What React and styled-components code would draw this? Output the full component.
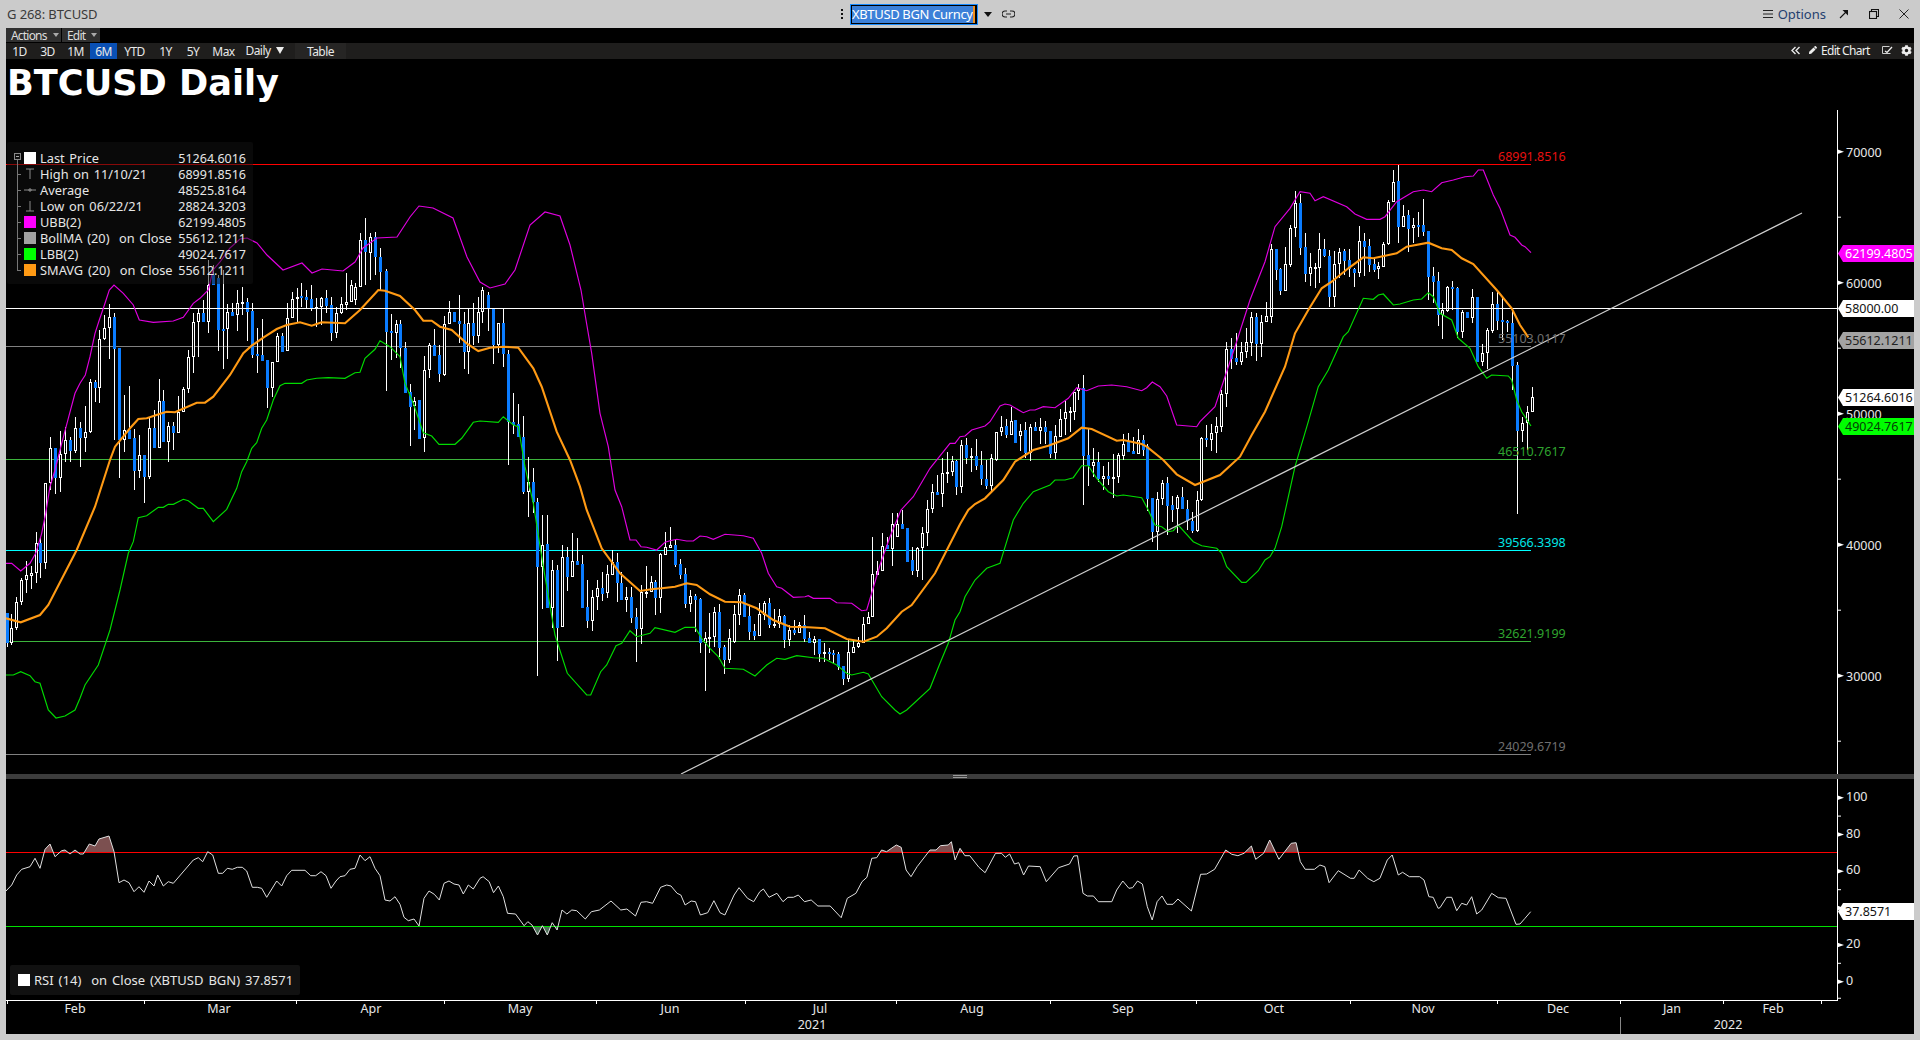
import React from "react";
import styled, { createGlobalStyle } from "styled-components";
import { FaCog, FaPen } from "react-icons/fa";

const UI_FONT = `"Noto Sans", "Open Sans", "Liberation Sans", sans-serif`;

const GlobalStyle = createGlobalStyle`
  html, body { margin: 0; padding: 0; background: #cbcbcb; }
  * { box-sizing: border-box; }
`;

/* ---------- chart data (page coordinates through per-crop transforms) ---------- */
const parseCandles = (src, tx, ty) =>
  src.trim().split(/\s*;\s*/).filter(Boolean).map((row) => {
    const [x, hi, top, bot, lo, c] = row.split(/\s+/);
    return { x: tx(+x), hi: ty(+hi), top: ty(+top), bot: ty(+bot), lo: ty(+lo), blue: c === "b" };
  });

const C7 = `20 970 970 1058 1070 b;34 972 1015 1058 1064 w;49 920 935 1015 1020 w;64 865 870 935 945 w;79 812 855 870 910 w;93 828 850 857 897 w;107 727 760 850 880 w;121 745 760 820 865 b;136 578 580 820 838 w;151 440 475 580 600 w;166 475 475 565 613 b;181 423 492 565 605 w;196 410 450 493 515 w;211 440 450 482 515 b;226 382 415 482 490 w;241 396 415 443 530 b;256 348 427 443 485 w;271 268 277 427 428 w;286 270 277 293 335 b;298 120 148 293 338 w;313 75 115 148 150 w;328 42 82 115 208 w;343 70 82 177 450 b;358 173 173 450 565 b;373 315 420 450 485 w;388 288 420 447 447 b;403 418 445 543 600 b;418 435 495 543 565 w;433 495 495 560 640 b;448 385 415 560 568 w;463 360 415 473 473 b;476 267 333 473 475 w;490 300 333 455 455 b;505 395 408 455 515 w;520 395 408 428 480 b;535 318 367 428 428 w;550 290 298 367 367 w;565 180 202 298 310 w;580 68 97 202 248 w;595 55 70 97 200 w;610 30 70 97 97 b;625 -90 -15 97 128 w;640 -75 -45 -15 -15 b;655 -45 -36 120 182 b;668 -60 116 120 238 b;682 42 67 118 207 w;697 40 67 77 77 b;712 0 40 75 122 w;727 -10 35 40 75 w;742 25 35 65 153 b;757 40 63 195 203 b;772 115 192 197 250 b;787 88 195 213 213 b;802 210 210 293 353 b;817 215 215 293 320 w;832 130 138 215 215 w;845 130 138 185 185 b;860 40 85 182 182 w;875 5 28 85 85 w;890 -5 20 28 100 w;904 -20 18 22 50 b;918 0 22 30 55 b;934 -15 27 53 63 b;949 25 50 52 112 w;964 20 25 52 105 w;979 0 25 47 70 b;994 20 45 128 152 b;1009 50 70 128 143 w;1023 22 42 70 72 w;1037 -51 35 45 60 w;1052 -30 -15 35 35 w;1065 -21 -9 30 45 w;1080 -171 -150 -9 -9 w;1095 -216 -150 -114 -15 b;1110 -171 -159 -111 -30 w;1126 -174 -159 -99 -45 b;1141 -126 -99 -54 0 b;1157 -63 -57 125 302 b;1172 72 122 128 210 b;1187 90 102 128 205 w;1201 90 102 175 235 b;1214 155 175 310 310 b;1229 282 307 350 467 b;1243 322 332 348 420 w;1258 330 330 447 447 b;1273 198 240 445 485 w;1288 160 165 240 263 w;1303 118 165 197 197 b;1318 165 195 253 275 b;1333 78 103 255 258 w;1348 33 67 103 103 w;1363 65 67 95 95 b;1378 15 93 103 160 b;1391 65 102 185 238 b;1405 55 100 185 253 w;1420 40 100 137 165 b;1435 22 67 137 160 w`;

const C8 = `7 -10 0 67 100 w;25 5 15 55 122 b;40 55 55 165 222 b;55 100 100 165 190 w;70 55 100 193 230 b;85 180 192 397 525 b;100 310 397 405 432 b;115 343 403 440 440 b;130 378 440 605 612 b;143 500 575 605 680 w;158 535 575 635 670 b;172 625 635 830 1157 b;187 675 765 830 958 w;202 675 763 953 953 b;217 810 840 953 1015 w;232 825 840 1013 1112 b;247 765 800 1012 1012 w;262 770 800 860 902 b;277 730 813 860 860 w;292 745 813 825 825 b;307 795 822 953 953 b;320 870 950 992 1015 b;335 900 920 992 1022 w;350 870 895 920 960 w;365 845 893 912 932 b;380 825 852 910 925 w;395 780 815 855 855 w;410 790 815 880 935 b;424 845 880 930 930 b;439 890 922 930 965 w;454 890 920 983 1000 b;469 955 980 1017 1115 b;484 885 905 1017 1062 w;499 828 905 908 925 w;512 857 877 905 905 w;526 870 877 923 975 b;541 790 793 923 968 w;556 725 772 795 795 w;571 712 765 775 775 w;586 750 765 825 830 b;601 808 822 855 867 b;616 833 852 942 955 b;631 900 918 942 965 w;646 912 917 930 1025 b;661 925 927 1058 1088 b;676 1025 1045 1058 1202 w;688 968 1040 1047 1090 w;703 950 967 1042 1070 w;718 942 967 1073 1100 b;733 1065 1070 1110 1152 b;748 1018 1045 1110 1120 w;763 945 972 1055 1060 w;778 897 915 975 1005 w;793 908 915 980 980 b;808 948 978 1025 1050 b;823 1003 1023 1037 1050 b;838 940 973 1037 1037 w;853 932 940 975 990 w;866 925 940 1005 1015 b;881 958 1003 1007 1015 w;896 958 978 1003 1015 w;911 975 978 1050 1073 b;926 1005 1020 1050 1068 w;941 990 1020 1028 1035 b;956 995 1005 1028 1028 w;971 975 1005 1047 1055 b;986 1025 1045 1060 1060 b;1001 1038 1048 1060 1095 w;1016 1048 1048 1093 1115 b;1031 1060 1087 1092 1115 w;1046 1075 1086 1092 1110 b;1058 1080 1090 1095 1120 b;1073 1085 1092 1130 1140 b;1088 1128 1128 1167 1185 b;1103 1050 1087 1167 1175 w;1118 1050 1070 1090 1090 w;1133 1040 1060 1070 1075 w;1148 980 1003 1060 1060 w;1163 965 982 1003 1003 w;1177 740 852 982 982 w;1192 812 842 855 855 w;1207 730 767 842 842 w;1222 740 765 778 778 b;1235 670 703 778 828 w;1250 670 703 740 740 w;1265 660 703 717 717 b;1280 713 713 815 815 b;1295 770 810 843 855 b;1310 770 775 843 860 w;1325 710 730 775 870 w;1340 630 658 730 767 w;1355 583 607 658 668 w;1370 555 605 615 615 b;1385 505 550 613 652 w;1400 487 545 550 578 w;1415 498 513 545 558 w;1427 510 513 590 615 b`;

const C9 = `2 450 465 590 608 w;17 445 465 505 522 b;32 473 498 503 545 w;47 448 498 527 540 b;62 483 525 568 585 b;77 510 568 587 598 b;92 492 505 587 605 w;107 425 425 510 512 w;122 378 410 425 438 w;137 388 408 435 443 b;152 350 392 435 435 w;164 390 390 458 458 b;179 403 422 437 483 w;194 397 420 488 503 b;209 403 412 488 513 w;224 395 412 422 422 b;239 385 412 422 463 w;254 393 412 425 463 b;269 423 423 492 505 b;284 405 438 490 508 w;299 358 388 440 440 w;314 333 365 388 435 w;329 350 363 365 425 w;341 305 305 365 390 w;355 283 295 303 330 w;370 255 295 497 645 b;385 415 495 527 587 b;400 475 517 527 560 w;415 487 517 567 575 b;430 527 557 567 600 w;445 517 557 567 585 b;460 492 562 565 625 w;475 490 495 562 578 w;490 432 462 497 510 w;505 430 455 485 485 b;520 442 483 492 492 b;533 418 450 492 492 w;548 435 450 480 497 b;562 462 467 627 662 b;577 625 625 727 755 b;592 605 628 727 780 w;607 570 580 628 645 w;622 562 580 647 735 b;637 618 645 660 695 b;652 615 622 658 730 w;667 590 622 658 658 b;682 630 657 692 720 b;697 665 692 722 730 b;710 603 630 722 725 w;724 440 445 630 632 w;739 405 445 450 470 b;754 402 430 450 483 w;769 380 408 430 490 w;784 300 313 410 425 w;799 155 178 313 352 w;814 145 178 207 237 b;829 130 205 215 225 b;844 155 187 215 225 w;859 115 157 187 205 w;874 65 82 158 197 w;889 70 82 162 212 b;902 75 97 162 200 w;917 37 78 97 97 w`;

const C10 = `212 283 297 500 518 w;227 297 297 360 390 b;241 355 358 422 435 b;256 292 343 422 422 w;271 225 235 345 350 w;286 122 160 235 260 w;301 133 160 293 315 b;316 250 292 372 395 b;331 310 352 372 408 w;346 340 350 353 415 w;358 250 297 353 400 w;373 268 297 318 320 b;388 300 317 440 472 b;403 302 343 440 472 w;418 295 305 343 385 w;433 297 303 333 375 b;448 297 330 358 380 b;463 355 358 368 412 b;478 228 273 368 380 w;493 250 273 290 378 b;508 268 288 345 365 b;523 325 343 360 365 b;535 335 348 358 388 w;550 275 283 350 350 w;565 150 155 283 285 w;580 60 95 155 155 w;595 45 93 230 278 b;610 165 197 230 230 w;625 180 195 237 305 b;640 205 225 235 280 w;655 185 225 228 260 b;670 148 225 245 258 b;685 243 243 380 450 b;700 352 378 395 458 b;715 365 393 495 527 b;727 460 480 495 567 w;742 408 412 482 485 w;757 393 412 417 480 b;772 412 413 545 565 b;787 480 487 545 565 w;802 485 487 503 503 b;817 418 440 503 518 w;832 440 440 637 637 b;847 583 610 637 648 w;862 535 540 610 658 w;877 425 462 543 548 w;892 425 462 513 540 b;905 437 510 515 570 b;920 510 513 520 545 b;935 475 520 648 720 b;950 635 645 843 1092 b;965 800 820 843 875 w;980 768 787 820 900 w;995 712 742 787 787 w`;

const third = (z) => z / 3;
const CANDLES = [
  ...parseCandles(C7, third, (z) => 290 + z / 3),
  ...parseCandles(C8, (z) => 480 + z / 3, (z) => 290 + z / 3),
  ...parseCandles(C9, (z) => 960 + z / 3, (z) => 290 + z / 3),
  ...parseCandles(C10, (z) => 1200 + z / 3, (z) => 150 + z / 3),
];

const seg = (src, ox, oy, sx = 1 / 3) =>
  src.trim().split(/\s+/).map((p) => {
    const [x, y] = p.split(",").map(Number);
    return [(ox + x * sx).toFixed(1), (oy + y / 3).toFixed(1)].join(",");
  });
const raw = (src) => src.trim().split(/\s+/);

const UPPER_BAND = [
  ...seg("18,820 35,820 62,843 90,820 107,790 125,730 137,670 150,590 165,540 185,460 205,385 225,310 240,280 256,255 270,200 285,130 298,90 315,40 328,0", 0, 290),
  ...raw("114,285"),
  ...seg("370,10 400,45 418,90 460,97 520,93 550,82 580,40 600,25 625,0", 0, 290),
  ...raw("213,270 220,262 230,248 240,239 247,238 257,243 267,255 283,270 302,263 312,273 322,269 343,271 355,262 363,248 377,238 397,237 410,217 419,206 433,208 453,218 467,257 480,282 490,288 505,284 515,270 530,225 545,212 560,216 570,245"),
  ...seg("303,0 318,90 335,190 360,370 385,470 405,600 425,650 450,750 468,750 483,770 500,772 530,780 555,757 570,752 590,748 620,753 640,753 660,738 680,740 700,748 735,733 790,737 820,745 845,790 865,850 890,890 905,895 940,922 975,920 985,917 1000,925 1050,925 1070,938 1115,940 1145,962 1160,960 1200,825 1230,740 1263,660 1300,620 1350,535 1410,460 1425,460", 480, 290),
  ...seg("0,440 15,438 35,420 75,408 90,395 120,348 135,342 150,345 190,368 210,360 225,360 250,350 285,353 325,325 350,293 380,302 415,288 455,285 500,290 545,302 560,293 577,276 600,290 620,318 650,405 710,410", 960, 290),
  ...seg("0,815 45,770 75,680 105,590 150,450 195,335 225,230 270,175 300,125 330,130 345,152 370,140 440,170 465,192 500,208 540,208 555,200 590,155 640,125 670,120 695,125 725,98 760,90 795,80 820,78 835,60 850,60 880,135 900,175 930,255 945,262 965,285 975,290 993,308", 1200, 150),
];

const LOWER_BAND = [
  ...seg("18,1155 40,1155 62,1145 90,1157 105,1175 120,1180 145,1260", 0, 290),
  ...raw("56,718 65,716"),
  ...seg("225,1260 240,1225 255,1185 295,1125 330,1020 360,900 385,790 400,755 415,683 440,677 475,652 490,652 505,643 520,643 550,628 565,632 595,655 610,655 640,695 680,658 710,595 725,545 740,515 755,475 770,458 785,415 800,390 820,330 840,287 855,280 905,280 920,270 950,265 985,263 1035,265 1065,248 1080,247 1095,205 1125,178 1140,152 1170,170 1200,200 1215,280 1240,340 1270,428 1295,438 1317,463 1365,463 1385,445 1420,397", 0, 290),
  ...seg("0,393 55,397 70,380 100,405 115,410 135,530 160,640 190,830 225,1035 262,1150 320,1215 332,1215 362,1145 380,1125 408,1067 425,1060 450,1022 470,1040 510,1030 525,1013 585,1027 615,1012 645,1012 665,1045 690,1075 715,1100 735,1135 790,1138 825,1158 860,1125 890,1105 915,1108 950,1097 1000,1103 1030,1105 1070,1125 1100,1150 1115,1155 1150,1147 1165,1152 1205,1220 1245,1260", 480, 290),
  ...raw("900,714"),
  ...seg("1280,1260 1350,1195 1380,1120 1405,1060 1425,990", 480, 290),
  ...seg("0,965 15,920 45,870 80,835 120,820 160,690 190,640 220,605 270,585 285,570 315,570 340,563 365,527 385,527 410,565 445,605 470,618 490,615 545,623 565,660 585,705 605,710 625,725 640,722 655,705 700,755 725,767 770,775 785,790 800,830 845,877 858,877 895,842 915,810 930,800 945,775 965,710 1005,530 1045,395 1075,290 1105,240 1150,140 1165,125", 960, 290),
  ...seg("490,445 520,448 535,435 550,432 580,465 600,462 640,450 665,447 685,428 700,440 720,490 755,510 775,565 810,595 835,650 860,685 875,675 925,678 935,690 950,750 965,785 993,828", 1200, 150),
];

const SMA = [
  ...seg("18,985 62,997 120,975 145,945 230,780 285,650 330,510 345,470 390,415 415,387 440,385 485,370 500,365 525,367 590,338 615,338 640,320 690,255 730,190 755,167 790,143 830,117 860,105 900,97 935,107 965,97 1035,100 1080,60 1135,0 1155,2 1200,18 1245,60 1270,92 1295,92 1320,110 1355,120 1400,160 1435,183", 0, 290),
  ...seg("30,173 70,170 115,173 160,235 185,290 230,425 270,510 300,590 320,660 365,775 420,850 480,903 520,897 545,895 585,890 620,880 650,885 690,913 735,935 785,937 830,955 880,990 930,1010 985,1012 1035,1015 1100,1047 1150,1055 1190,1040 1220,1015 1265,965 1295,945 1365,850", 480, 290),
  ...seg("0,703 25,660 45,642 75,625 130,570 165,515 220,480 265,467 325,445 365,413 395,417 470,452 490,450 545,462 560,470 610,510 650,553 705,585 780,555 840,500 875,435 915,365 975,230 1005,130 1045,60", 960, 290),
  ...seg("365,415 395,395 445,355 490,322 520,325 590,310 620,290 685,278 725,295 755,300 785,325 820,342 890,420 935,475 960,525 985,562", 1200, 150),
];

const RSI = [
  ...seg("18,393 35,375 50,345 65,328 90,320 105,295 120,325 135,268 150,252 165,290 185,272 195,270 210,282 225,270 240,282 250,282 268,252 285,258 297,237 327,228 342,275 357,368 372,360 387,368 402,395 417,380 432,397 447,363 462,378 473,345 490,378 505,365 520,370 580,300 595,293 608,305 623,275 638,285 655,340 668,340 682,325 697,328 712,322 727,322 740,333 757,382 772,382 785,385 800,412 830,363 845,378 860,347 875,331 915,331 932,347 947,347 963,335 978,347 993,385 1008,363 1020,350 1035,347 1050,328 1065,325 1080,285 1095,302 1110,290 1125,325 1140,347 1155,420 1170,423 1185,410 1200,433 1212,472 1225,482 1242,477 1257,498 1272,415 1287,393 1303,403 1318,420 1332,370 1347,363 1362,372 1377,375 1390,402 1405,375 1420,387", 0, 760),
  ...seg("0,355 5,350 15,365 22,398 30,378 38,410 45,460 58,462 72,497 78,485 85,495 94,525 102,497 110,525 118,488 126,510 134,450 142,462 150,450 158,452 172,477 182,455 195,450 214,423 230,450 240,447 254,468 263,427 272,425 282,430 295,382 305,375 312,378 322,400 328,405 335,435 345,423 352,425 360,465 372,458 382,422 392,458 400,465 415,405 423,383 437,415 447,425 457,395 463,387 472,412 485,400 495,425 503,412 512,412 520,405 530,425 541,420 552,438 572,438 590,473 600,415 614,400 624,365 632,352 640,295 648,293 656,270 664,275 680,255 688,262 696,330 704,350 714,320 735,270 745,270 752,257 765,255 770,245 776,300 784,265 792,287 800,287 815,322 825,338 842,280 852,280 858,292 865,282 873,312 880,308 888,345 896,318 915,320 925,365 945,323 963,312 970,288 976,287 985,400 992,408 1002,408 1010,425 1032,425 1040,390 1050,363 1060,385 1066,383 1074,363 1082,372 1090,440 1098,480 1106,425 1114,408 1122,433 1132,433 1140,417 1162,453 1177,343 1187,342 1200,328 1218,270 1228,283 1238,287 1248,280 1260,258 1267,298 1280,280 1290,240 1305,298 1325,250 1333,248 1340,305 1348,328 1363,328 1372,315 1380,320 1387,368 1402,332 1422,355 1428,355 1436,330 1450,355 1460,365 1470,355 1482,300 1490,285 1500,345 1507,337 1518,350 1535,350 1542,360 1550,410 1557,412 1565,445", 480, 760, 0.6122),
  ...seg("0,503 20,472 35,472 50,512 65,490 80,495 95,470 110,522 125,510 155,460 175,473 198,475 228,553 240,552 255,535 272,515", 1440, 740),
];

const priceY = (p) => 151.7 + (70000 - p) * 0.0131;
const rsiY = (v) => 981.7 - v * 1.84;

const LEVELS = [
  { value: "68991.8516", y: 164.5, color: "#ff0000", text: "#e81010" },
  { value: "55103.0117", y: 346.5, color: "#808080", text: "#6f6f6f" },
  { value: "46510.7617", y: 459.5, color: "#3cb43c", text: "#2fa42f" },
  { value: "39566.3398", y: 550.5, color: "#00ffff", text: "#00e6e6" },
  { value: "32621.9199", y: 641.5, color: "#3cb43c", text: "#2fa42f" },
  { value: "24029.6719", y: 754.5, color: "#808080", text: "#6f6f6f" },
];

const PRICE_TICKS = [70000, 60000, 50000, 40000, 30000];
const PRICE_MINOR = [65000, 55000, 45000, 35000, 25000];
const RSI_TICKS = [100, 80, 60, 20, 0];
const RSI_MINOR = [90, 50, 10, -9];

const TAGS = [
  { label: "62199.4805", y: 253.5, bg: "#ff00ff", fg: "#ffffff" },
  { label: "58000.00", y: 308.5, bg: "#ffffff", fg: "#111111" },
  { label: "55612.1211", y: 340.5, bg: "#a3a3a3", fg: "#222222" },
  { label: "51264.6016", y: 397.5, bg: "#ffffff", fg: "#111111" },
  { label: "49024.7617", y: 426.5, bg: "#00ff00", fg: "#063d06" },
];

const MONTHS = [
  ["Feb", 75], ["Mar", 219], ["Apr", 371], ["May", 520], ["Jun", 670], ["Jul", 820], ["Aug", 972],
  ["Sep", 1123], ["Oct", 1274], ["Nov", 1423], ["Dec", 1558], ["Jan", 1672], ["Feb", 1773],
];
const MONTH_TICKS = [7, 144, 296, 444, 596, 745, 896, 1050, 1196, 1350, 1497, 1620, 1723, 1821];

const LEGEND = [
  { mark: "box", swatch: "#ffffff", label: "Last Price", value: "51264.6016" },
  { mark: "high", label: "High on 11/10/21", value: "68991.8516" },
  { mark: "avg", label: "Average", value: "48525.8164" },
  { mark: "low", label: "Low on 06/22/21", value: "28824.3203" },
  { swatch: "#ff00ff", label: "UBB(2)", value: "62199.4805" },
  { swatch: "#a3a3a3", label: "BollMA (20)  on Close", value: "55612.1211" },
  { swatch: "#00ff00", label: "LBB(2)", value: "49024.7617" },
  { swatch: "#ff9a14", label: "SMAVG (20)  on Close", value: "55612.1211", last: true },
];

const PERIODS = [
  { label: "1D", w: 27 }, { label: "3D", w: 27 }, { label: "1M", w: 27 }, { label: "6M", w: 27, active: true },
  { label: "YTD", w: 33 }, { label: "1Y", w: 27 }, { label: "5Y", w: 26 }, { label: "Max", w: 33 },
];

/* ---------- styled parts ---------- */
const Page = styled.div`
  width: 1920px; height: 1040px; overflow: hidden;
  background: #cbcbcb; padding: 0 6px 6px;
  display: flex; flex-direction: column;
  font-family: ${UI_FONT}; font-size: 13px;
`;
const TitleBar = styled.header`
  height: 28px; flex: none; display: flex; align-items: center; color: #333;
`;
const WindowTitle = styled.span`
  width: 834px; flex: none; padding-left: 1px; font-size: 13px; letter-spacing: -.1px; color: #3a3a3a;
`;
const SymbolGroup = styled.div` display: flex; align-items: center; `;
const SymbolInput = styled.div`
  width: 128px; height: 21px; margin-left: 6px; border: 1px solid #1a8cff; background: #000;
  padding: 1px 4px 1px 1px; display: flex;
`;
const SymbolText = styled.span`
  flex: 1; background: #3c80d8; color: #fff; font-size: 13px; line-height: 17px; white-space: nowrap;
  letter-spacing: -.35px; border-right: 2px solid #f0901e;
`;
const WindowActions = styled.div`
  margin-left: auto; display: flex; align-items: center; padding-right: 3px;
`;
const OptionsText = styled.span` color: #24406e; font-size: 13px; margin: 0 11px 0 5px; `;
const IconButton = styled.span`
  display: inline-flex; width: ${(p) => p.$w || 14}px; height: 14px; align-items: center; justify-content: center;
  margin-right: ${(p) => p.$mr || 0}px; margin-left: ${(p) => p.$ml || 0}px;
`;
const Workspace = styled.main`
  flex: 1; min-height: 0; background: #000; display: flex; flex-direction: column; color: #eee;
`;
const ActionRow = styled.div` height: 15px; flex: none; display: flex; gap: 1px; `;
const ActionButton = styled.button`
  all: unset; box-sizing: border-box; width: ${(p) => p.$w}px; height: 14px; background: #303030; color: #ddd;
  font-size: 12px; line-height: 13px; letter-spacing: -.8px; padding-left: 5px; display: flex; align-items: center; gap: 6px;
  &::after { content: ""; border: 3px solid transparent; border-top: 4px solid #aaa; border-bottom: 0; }
`;
const PeriodBar = styled.nav`
  height: 16px; flex: none; background: #1f1e1d; display: flex; align-items: stretch;
`;
const PeriodButton = styled.button`
  all: unset; box-sizing: border-box; width: ${(p) => p.$w}px; margin-right: 1px; text-align: center;
  font-size: 12px; line-height: 13px; letter-spacing: -.55px; color: #e8e8e8;
  background: ${(p) => (p.$active ? "#0a50b4" : "#1f1e1d")};
`;
const DailySelect = styled(PeriodButton)`
  display: flex; align-items: center; justify-content: center; gap: 5px; padding-bottom: 2px;
  &::after { content: ""; border: 4px solid transparent; border-top: 7px solid #eee; border-bottom: 0; }
`;
const TableButton = styled(PeriodButton)` margin-left: 6px; background: #262524; `;
const BarRight = styled.div` margin-left: auto; display: flex; align-items: center; color: #eee; padding-bottom: 2px; `;
const EditChart = styled.span`
  display: flex; align-items: center; gap: 4px; font-size: 12px; letter-spacing: -.7px; width: 72px; margin-right: 3px; padding-left: 4px;
`;
const UpperPane = styled.section` position: relative; height: 715px; flex: none; overflow: hidden; `;
const LowerPane = styled.section` position: relative; height: 221px; flex: none; overflow: hidden; `;
const ChartCanvas = styled.svg` position: absolute; inset: 0; display: block; `;
const ChartTitle = styled.h1`
  position: absolute; left: 1px; top: 0px; margin: 0; color: #fff;
  font: bold 35.2px/48px "DejaVu Sans", sans-serif;
`;
const Splitter = styled.div`
  height: 5px; flex: none; background: #3c3c3c; display: flex; align-items: center; justify-content: center;
`;
const SplitHandle = styled.span`
  width: 14px; height: 3px; border-top: 1px solid #9a9a9a; border-bottom: 1px solid #9a9a9a;
`;
const LevelLabel = styled.span`
  position: absolute; left: 1492px; font-size: 12.5px; line-height: 14px; white-space: nowrap;
  color: ${(p) => p.$color};
`;
const AxisLabel = styled.span`
  position: absolute; left: 1840px; font-size: 12.5px; line-height: 14px; color: #e8e8e8;
`;
const PriceTag = styled.span`
  position: absolute; left: 1832px; width: 76px; height: 17px; padding-left: 7px;
  font-size: 12.5px; line-height: 17px; white-space: nowrap;
  background: ${(p) => p.$bg}; color: ${(p) => p.$fg};
  clip-path: polygon(5px 0, 100% 0, 100% 100%, 5px 100%, 0 50%);
`;
const Legend = styled.div`
  position: absolute; left: 1px; top: 83px; width: 246px; height: 142px; padding: 7px 7px 0 7px;
  background: rgba(18, 18, 18, .5); border-radius: 2px;
  display: grid; grid-auto-rows: 16px; color: #e6e6e6;
`;
const LegendRow = styled.div`
  display: grid; grid-template-columns: 10px 12px 1fr auto; column-gap: 0; align-items: center;
`;
const TreeCell = styled.span`
  position: relative; height: 16px; display: block; width: 10px;
  &::before {
    content: ""; position: absolute; left: 3px; top: ${(p) => (p.$root ? "10px" : "0")};
    height: ${(p) => (p.$last ? "9px" : "16px")}; border-left: 1px solid #777;
  }
  &::after {
    content: ""; position: absolute; left: 3px; top: 8px; width: 4px; border-top: 1px solid #777;
    display: ${(p) => (p.$root ? "none" : "block")};
  }
`;
const TreeBox = styled.span`
  position: absolute; left: 0; top: 3px; width: 7px; height: 7px; border: 1px solid #888; background: #111; z-index: 1;
  &::after { content: ""; position: absolute; left: 1px; right: 1px; top: 2px; border-top: 1px solid #aaa; }
`;
const Swatch = styled.span` width: 12px; height: 12px; display: block; flex: none; background: ${(p) => p.$color}; `;
const LegendLabel = styled.span` padding-left: 4px; white-space: pre; font-size: 12.8px; word-spacing: 1.4px; `;
const LegendValue = styled.span` font-size: 12.5px; `;
const RsiLegend = styled.div`
  position: absolute; left: 4px; top: 186px; height: 30px; width: 290px; padding-left: 8px; border-radius: 2px;
  background: #111; color: #e6e6e6; display: flex; align-items: center; gap: 4px;
  font-size: 13px; white-space: pre; word-spacing: 1.6px;
`;
const TimeAxis = styled.footer` position: relative; height: 34px; flex: none; overflow: hidden; `;
const TimeLabel = styled.span`
  position: absolute; transform: translateX(-50%); font-size: 12.5px; line-height: 14px; color: #e8e8e8;
  top: ${(p) => (p.$year ? "18px" : "2px")};
`;

/* ---------- drawings ---------- */
const Candle = ({ c }) => {
  const px = Math.round(c.x);
  const top = Math.round(c.top);
  const h = Math.max(Math.round(c.bot) - top, 2);
  const wick = <line x1={px + 0.5} x2={px + 0.5} y1={Math.round(c.hi)} y2={Math.round(c.lo)} stroke="#fff" />;
  return c.blue ? (
    <g>{wick}<rect x={px - 1} y={top} width="3" height={h} fill="#0a7cff" /></g>
  ) : (
    <g>{wick}<rect x={px - 0.5} y={top + 0.5} width="2" height={h - 1} fill="#000" stroke="#fff" /></g>
  );
};

const PriceChart = () => (
  <ChartCanvas width="1908" height="715" viewBox="6 59 1908 715">
    {LEVELS.map((l) => (
      <line key={l.value} x1="6" x2="1531" y1={l.y} y2={l.y} stroke={l.color} />
    ))}
    <g shapeRendering="crispEdges">
      {CANDLES.map((c, i) => <Candle key={i} c={c} />)}
    </g>
    <line x1="6" x2="1837" y1="308.5" y2="308.5" stroke="#fff" />
    <polyline points={UPPER_BAND.join(" ")} fill="none" stroke="#e000e0" strokeWidth="1.15" />
    <polyline points={LOWER_BAND.join(" ")} fill="none" stroke="#00dc00" strokeWidth="1.15" />
    <polyline points={SMA.join(" ")} fill="none" stroke="#ff9a14" strokeWidth="2.1" />
    <line x1="681" y1="774" x2="1802" y2="213" stroke="#cfcfcf" strokeWidth="1.2" />
    <line x1="1837.5" x2="1837.5" y1="110" y2="774" stroke="#fff" />
    {PRICE_TICKS.map((p) => {
      const y = priceY(p);
      return <polygon key={p} points={`1837,${y - 2.5} 1844,${y} 1837,${y + 2.5}`} fill="#fff" />;
    })}
    {PRICE_MINOR.map((p) => (
      <line key={p} x1="1837" x2="1841" y1={priceY(p)} y2={priceY(p)} stroke="#fff" />
    ))}
  </ChartCanvas>
);

const RsiChart = () => (
  <ChartCanvas width="1908" height="221" viewBox="6 779 1908 221">
    <defs>
      <clipPath id="rsiOver"><rect x="6" y="779" width="1831" height="73.3" /></clipPath>
      <clipPath id="rsiUnder"><rect x="6" y="926.3" width="1831" height="60" /></clipPath>
    </defs>
    <polygon points={RSI.join(" ")} fill="#7c5050" clipPath="url(#rsiOver)" />
    <polygon points={RSI.join(" ")} fill="#4d7058" clipPath="url(#rsiUnder)" />
    <line x1="6" x2="1837" y1="852.5" y2="852.5" stroke="#ff0000" />
    <line x1="6" x2="1837" y1="926.5" y2="926.5" stroke="#00e000" />
    <polyline points={RSI.join(" ")} fill="none" stroke="#e0e0e0" strokeWidth="1" />
    <line x1="1837.5" x2="1837.5" y1="779" y2="1000" stroke="#fff" />
    {[...RSI_TICKS, 40].map((v) => {
      const y = rsiY(v);
      return <polygon key={v} points={`1837,${y - 2.5} 1844,${y} 1837,${y + 2.5}`} fill="#fff" />;
    })}
    {RSI_MINOR.map((v) => (
      <line key={v} x1="1837" x2="1841" y1={rsiY(v)} y2={rsiY(v)} stroke="#fff" />
    ))}
  </ChartCanvas>
);

const TreeGlyph = ({ mark }) => {
  const paths = {
    high: <path d="M2 1h8M6 1v10" stroke="#8c8c8c" fill="none" />,
    avg: <path d="M0 6h12M6 4v4M4 6h4" stroke="#8c8c8c" fill="none" />,
    low: <path d="M6 1v10M2 11h8" stroke="#8c8c8c" fill="none" />,
  };
  return <svg width="12" height="12" viewBox="0 0 12 12">{paths[mark]}</svg>;
};

const LinkIcon = () => (
  <svg width="13" height="8" viewBox="0 0 13 8" fill="none" stroke="#222" strokeWidth="1.2">
    <path d="M5 1H3a3 3 0 0 0 0 6h2M8 1h2a3 3 0 0 1 0 6H8M4 4h5" />
  </svg>
);
const DotsIcon = () => (
  <svg width="4" height="12" viewBox="0 0 4 12" fill="#111">
    <rect x="1" y="1" width="2" height="2" /><rect x="1" y="5" width="2" height="2" /><rect x="1" y="9" width="2" height="2" />
  </svg>
);
const Caret = () => (
  <svg width="8" height="5" viewBox="0 0 8 5" fill="#111"><path d="M0 0h8L4 5z" /></svg>
);
const MenuIcon = () => (
  <svg width="10" height="8" viewBox="0 0 10 8" stroke="#222"><path d="M0 .5h10M0 4h10M0 7.5h10" /></svg>
);
const ArrowIcon = () => (
  <svg width="10" height="10" viewBox="0 0 10 10" fill="#111" stroke="#111">
    <path d="M1 9 8 2" fill="none" strokeWidth="1.1" /><path d="M3.5 1H9v5.5z" stroke="none" />
  </svg>
);
const RestoreIcon = () => (
  <svg width="10" height="10" viewBox="0 0 10 10" fill="none" stroke="#111" strokeWidth="1.1">
    <rect x=".5" y="2.5" width="7" height="7" /><path d="M2.5 2.5v-2h7v7h-2" />
  </svg>
);
const CloseIcon = () => (
  <svg width="10" height="10" viewBox="0 0 10 10" stroke="#222"><path d="M.5.5l9 9M9.5.5l-9 9" /></svg>
);
const DoubleChevron = () => (
  <svg width="9" height="9" viewBox="0 0 9 9" fill="none" stroke="#e8e8e8" strokeWidth="1.4">
    <path d="M4.5 1 1 4.5 4.5 8M8.5 1 5 4.5 8.5 8" />
  </svg>
);
const ChartEditIcon = () => (
  <svg width="11" height="10" viewBox="0 0 11 10" fill="none" stroke="#ccc">
    <path d="M.5 1.5h7M.5 1.5v7h8" /><path d="M3 6l2 1.5L10 2" stroke="#eee" strokeWidth="1.3" />
  </svg>
);

export default function App() {
  return (
    <Page>
      <GlobalStyle />
      <TitleBar>
        <WindowTitle>G 268: BTCUSD</WindowTitle>
        <SymbolGroup>
          <DotsIcon />
          <SymbolInput><SymbolText>XBTUSD BGN Curncy</SymbolText></SymbolInput>
          <IconButton $w={8} $ml={6}><Caret /></IconButton>
          <IconButton $w={13} $ml={10}><LinkIcon /></IconButton>
        </SymbolGroup>
        <WindowActions>
          <MenuIcon />
          <OptionsText>Options</OptionsText>
          <IconButton $mr={16}><ArrowIcon /></IconButton>
          <IconButton $mr={16}><RestoreIcon /></IconButton>
          <IconButton><CloseIcon /></IconButton>
        </WindowActions>
      </TitleBar>
      <Workspace>
        <ActionRow>
          <ActionButton $w={55}>Actions</ActionButton>
          <ActionButton $w={38}>Edit</ActionButton>
        </ActionRow>
        <PeriodBar>
          {PERIODS.map((p) => (
            <PeriodButton key={p.label} $w={p.w} $active={p.active}>{p.label}</PeriodButton>
          ))}
          <DailySelect $w={47}>Daily</DailySelect>
          <TableButton $w={51}>Table</TableButton>
          <BarRight>
            <IconButton $w={14} $mr={3}><DoubleChevron /></IconButton>
            <EditChart><FaPen size={8} />Edit Chart</EditChart>
            <IconButton $w={14} $mr={5}><ChartEditIcon /></IconButton>
            <IconButton $w={14} $mr={1}><FaCog size={11} /></IconButton>
          </BarRight>
        </PeriodBar>
        <UpperPane>
          <PriceChart />
          <ChartTitle>BTCUSD Daily</ChartTitle>
          <Legend>
            {LEGEND.map((row, i) => (
              <LegendRow key={row.label}>
                <TreeCell $root={i === 0} $last={row.last}>{i === 0 && <TreeBox />}</TreeCell>
                {row.swatch ? <Swatch $color={row.swatch} /> : <TreeGlyph mark={row.mark} />}
                <LegendLabel>{row.label}</LegendLabel>
                <LegendValue>{row.value}</LegendValue>
              </LegendRow>
            ))}
          </Legend>
          {LEVELS.map((l) => (
            <LevelLabel key={l.value} $color={l.text} style={{ top: l.y - 59 - 15 }}>{l.value}</LevelLabel>
          ))}
          {PRICE_TICKS.map((p) => (
            <AxisLabel key={p} style={{ top: priceY(p) - 59 - 6 }}>{p}</AxisLabel>
          ))}
          {TAGS.map((t) => (
            <PriceTag key={t.label} $bg={t.bg} $fg={t.fg} style={{ top: t.y - 59 - 8.5 }}>{t.label}</PriceTag>
          ))}
        </UpperPane>
        <Splitter><SplitHandle /></Splitter>
        <LowerPane>
          <RsiChart />
          <RsiLegend><Swatch $color="#fff" />RSI (14)  on Close (XBTUSD BGN) 37.8571</RsiLegend>
          {RSI_TICKS.map((v) => (
            <AxisLabel key={v} style={{ top: rsiY(v) - 779 - 8 }}>{v}</AxisLabel>
          ))}
          <PriceTag $bg="#fff" $fg="#111" style={{ top: 911.5 - 779 - 8.5 }}>37.8571</PriceTag>
        </LowerPane>
        <TimeAxis>
          <ChartCanvas width="1908" height="34" viewBox="6 1000 1908 34">
            <line x1="6" x2="1838" y1="0" y2="0" transform="translate(0 1000.5)" stroke="#fff" />
            {MONTH_TICKS.map((x) => (
              <line key={x} x1={x + 0.5} x2={x + 0.5} y1="1000" y2="1004" stroke="#fff" />
            ))}
            <line x1="1620.5" x2="1620.5" y1="1017" y2="1034" stroke="#888" />
          </ChartCanvas>
          {MONTHS.map(([m, x], i) => (
            <TimeLabel key={i} style={{ left: x - 6 }}>{m}</TimeLabel>
          ))}
          <TimeLabel $year style={{ left: 812 - 6 }}>2021</TimeLabel>
          <TimeLabel $year style={{ left: 1728 - 6 }}>2022</TimeLabel>
        </TimeAxis>
      </Workspace>
    </Page>
  );
}
